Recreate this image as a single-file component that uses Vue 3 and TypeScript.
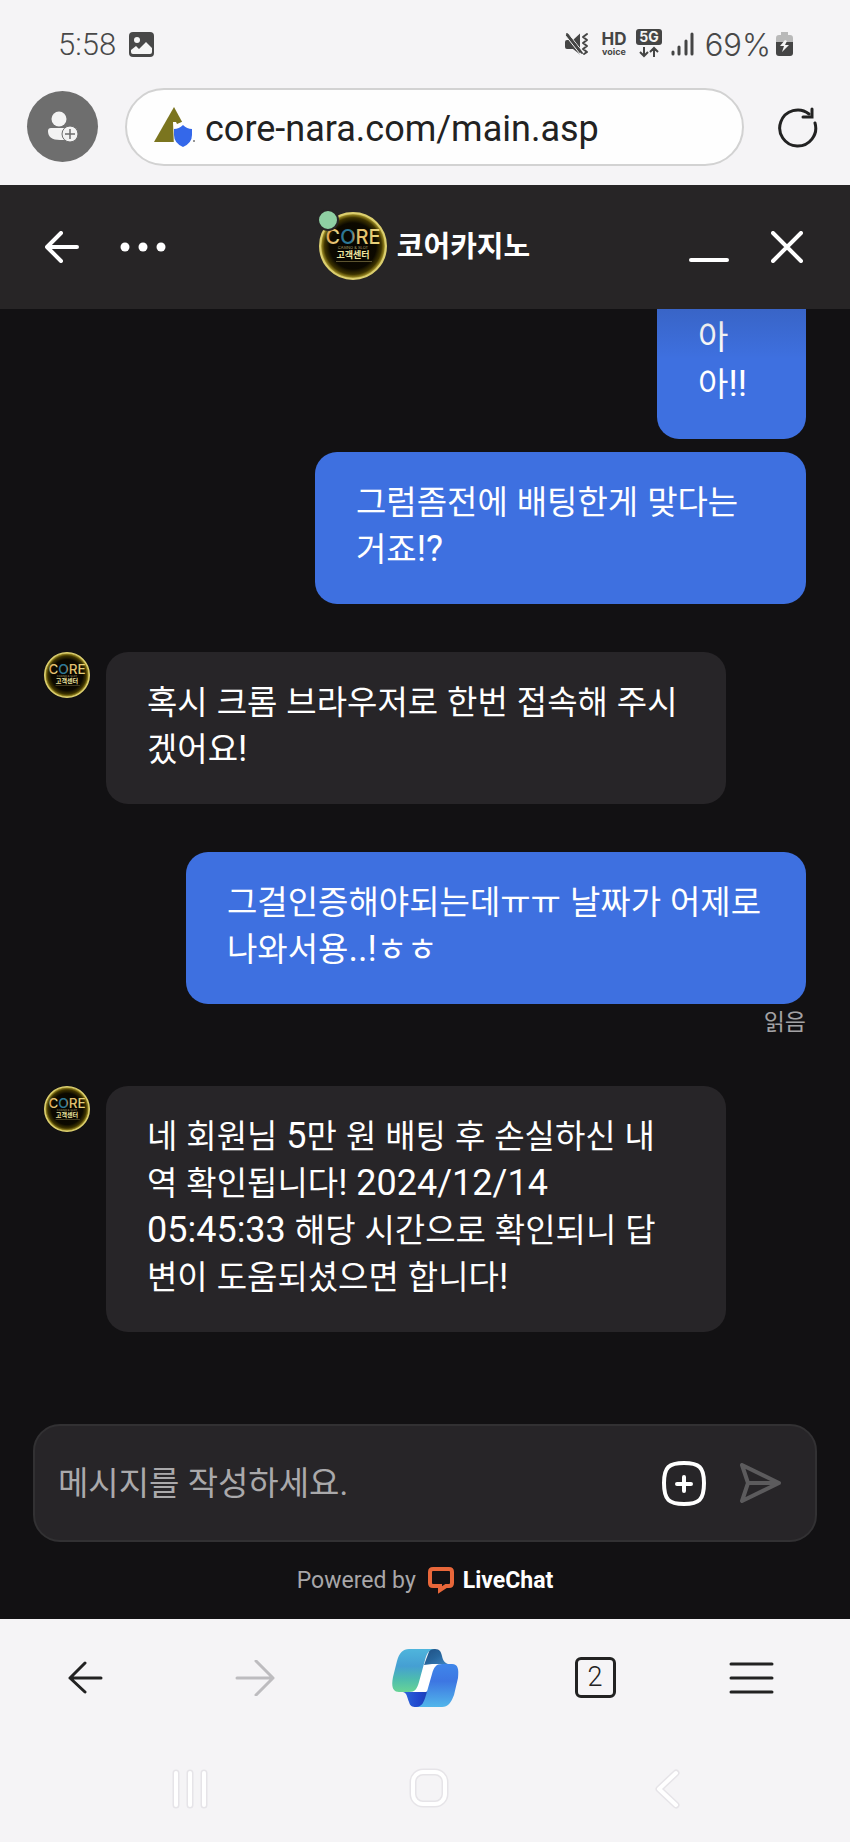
<script setup lang="ts">
import { ref } from 'vue'

interface Message {
  id: number
  from: 'me' | 'agent'
  lines: string[]
  size?: 'narrow' | 'medium'
  status?: string
}

const address = ref('core-nara.com/main.asp')
const draft = ref('')

const messages: Message[] = [
  { id: 1, from: 'me', lines: ['아', '아!!'], size: 'narrow' },
  { id: 2, from: 'me', lines: ['그럼좀전에 배팅한게 맞다는', '거죠!?'], size: 'medium' },
  { id: 3, from: 'agent', lines: ['혹시 크롬 브라우저로 한번 접속해 주시', '겠어요!'] },
  { id: 4, from: 'me', lines: ['그걸인증해야되는데ㅠㅠ 날짜가 어제로', '나와서용..!ㅎㅎ'], status: '읽음' },
  {
    id: 5,
    from: 'agent',
    lines: [
      '네 회원님 5만 원 배팅 후 손실하신 내',
      '역 확인됩니다! 2024/12/14',
      '05:45:33 해당 시간으로 확인되니 답',
      '변이 도움되셨으면 합니다!',
    ],
  },
]

// Splits a line so that latin characters can be set slightly larger than hangul.
const runs = (line: string): string[] => line.split(/([ -~]+)/).filter((r) => r !== '')
const isLatin = (run: string): boolean => /^[ -~]/.test(run)
</script>

<template>
  <div class="phone">
    <svg class="defs" width="0" height="0" aria-hidden="true">
      <defs>
        <radialGradient id="coin">
          <stop offset="0" stop-color="#050400" />
          <stop offset="0.7" stop-color="#0c0900" />
          <stop offset="0.86" stop-color="#3d3300" />
          <stop offset="0.94" stop-color="#8c7c1c" />
          <stop offset="1" stop-color="#e9df82" />
        </radialGradient>
        <linearGradient id="gold" x1="0" y1="0" x2="1" y2="0">
          <stop offset="0" stop-color="#e0a050" />
          <stop offset="0.22" stop-color="#e8d080" />
          <stop offset="0.3" stop-color="#2c7796" />
          <stop offset="0.48" stop-color="#2c7796" />
          <stop offset="0.54" stop-color="#e0b866" />
          <stop offset="1" stop-color="#e8d77e" />
        </linearGradient>
        <symbol id="avatar" viewBox="0 0 68 68">
          <circle cx="34" cy="34" r="33" fill="url(#coin)" stroke="#dccf6e" stroke-width="2" />
          <text x="34" y="32" text-anchor="middle" font-family="Inter, sans-serif" font-size="20" font-weight="500" fill="url(#gold)">CORE</text>
          <text x="34" y="37" text-anchor="middle" font-family="Inter, sans-serif" font-size="4" fill="#a89a68">CASINO &amp; SLOT</text>
          <text x="34" y="46" text-anchor="middle" font-family="'Noto Sans CJK KR', sans-serif" font-size="9" font-weight="700" fill="#f0e6a0">고객센터</text>
          <rect x="17" y="49" width="36" height="1" fill="#5e5530" />
        </symbol>
      </defs>
    </svg>

    <div class="status">
      <span class="clock">5:58</span>
      <svg class="gallery" width="25" height="25" viewBox="0 0 25 25" aria-hidden="true">
        <rect width="25" height="25" rx="4" fill="#484848" />
        <circle cx="8" cy="8" r="3" fill="#f5f5f5" />
        <path d="M2 18 L7 14 L10 17 L17 10 L23 16 V20 Q23 22 21 22 H4 Q2 22 2 20Z" fill="#f5f5f5" />
      </svg>
      <span class="grow"></span>
      <svg class="signals" width="130" height="32" viewBox="0 0 130 32" aria-hidden="true">
        <g fill="#454545">
          <path d="M0 14 Q0 12 2 12 H8 L15 5.500 V26.500 L8 21 H2 Q0 21 0 19Z" />
          <path d="M0 7 L3 5 L17 23 L15 26Z" stroke="#f5f5f5" stroke-width="1" />
          <path d="M2 6 L17 25" stroke="#454545" stroke-width="2" stroke-linecap="round" />
        </g>
        <path d="M22 6 L18 9 L22 12 L18 15 L22 18 L18 21 L22 24 L19 26" fill="none" stroke="#454545" stroke-width="2" stroke-linejoin="round" stroke-linecap="round" />
        <text x="49" y="17" text-anchor="middle" font-family="Inter, sans-serif" font-size="17" font-weight="700" fill="#454545">HD</text>
        <text x="49" y="27" text-anchor="middle" font-family="Inter, sans-serif" font-size="9" font-weight="700" fill="#454545">voice</text>
        <rect x="71" y="1" width="26" height="16" rx="3" fill="#454545" />
        <text x="84" y="14" text-anchor="middle" font-family="Inter, sans-serif" font-size="14" font-weight="700" fill="#f5f5f5">5G</text>
        <path d="M79 19 V28 M75 24 L79 28 L83 24 M89 29 V20 M85 24 L89 20 L93 24" fill="none" stroke="#454545" stroke-width="2" />
        <path d="M108 24 V26 M114 19 V26 M121 13 V26 M127 6 V26" stroke="#454545" stroke-width="3" stroke-linecap="round" />
      </svg>
      <span class="percent">69%</span>
      <svg class="battery" width="17" height="25" viewBox="0 0 17 25" aria-hidden="true">
        <path d="M5 0 H12 V3 H14 Q17 3 17 6 V11 H0 V6 Q0 3 3 3 H5Z" fill="#b9b9b9" />
        <path d="M0 10 H17 V21 Q17 24 14 24 H3 Q0 24 0 21Z" fill="#454545" />
        <path d="M9 8 L4 14 H8 L6 20 L13 13 H9 L11 9Z" fill="#f5f5f5" />
      </svg>
    </div>

    <div class="browser-top">
      <button class="profile" type="button" aria-label="프로필">
        <svg width="32" height="32" viewBox="0 0 32 32">
          <circle cx="12" cy="8" r="7.500" fill="#f3f3f3" />
          <path d="M4 17 H20 V29 H13 Q1 29 1 20 Q1 17 4 17Z" fill="#f3f3f3" />
          <circle cx="23" cy="23" r="8" fill="#f3f3f3" stroke="#6e6e6e" stroke-width="1" />
          <path d="M23 18 V28 M18 23 H28" stroke="#6e6e6e" stroke-width="1.500" />
        </svg>
      </button>
      <label class="address">
        <svg width="42" height="42" viewBox="0 0 42 42" aria-hidden="true">
          <path d="M21 1 L40 36 H1Z" fill="#7b751f" />
          <path d="M20 16 H23 L24 18 L31 15 L42 20 V42 H21Z" fill="#fefefe" />
          <path d="M30 19 Q34 23 39 23 V29 Q39 37 30 41 Q21 37 21 29 V23 Q26 23 30 19Z" fill="#3468ea" />
          <circle cx="41" cy="35" r="1" fill="#777" />
        </svg>
        <input v-model="address" type="text" aria-label="주소" />
      </label>
      <button class="reload" type="button" aria-label="새로고침">
        <svg width="42" height="42" viewBox="0 0 42 42" fill="none" stroke="#222" stroke-width="3" stroke-linecap="round">
          <path d="M39 17 A18 18 0 1 1 33 8" />
          <path d="M36 3 V11 H27" stroke-linejoin="miter" />
        </svg>
      </button>
    </div>

    <main class="chat">
      <header class="chat-head">
        <button type="button" aria-label="뒤로">
          <svg width="34" height="32" viewBox="0 0 34 32" fill="none" stroke="#fff" stroke-width="4" stroke-linecap="round" stroke-linejoin="round">
            <path d="M16 2 L2 16 L16 30 M2 16 H32" />
          </svg>
        </button>
        <button class="more" type="button" aria-label="더보기">
          <svg width="46" height="10" viewBox="0 0 46 10" fill="#fff">
            <circle cx="5" cy="5" r="4.500" /><circle cx="23" cy="5" r="4.500" /><circle cx="41" cy="5" r="4.500" />
          </svg>
        </button>
        <div class="who">
          <span class="portrait">
            <svg width="68" height="68" role="img" aria-label="코어카지노"><use href="#avatar" /></svg>
            <i class="online"></i>
          </span>
          <h1>코어카지노</h1>
        </div>
        <button class="minimize" type="button" aria-label="최소화">
          <svg width="40" height="32" viewBox="0 0 40 32"><path d="M2 29 H38" stroke="#fff" stroke-width="4" stroke-linecap="round" /></svg>
        </button>
        <button type="button" aria-label="닫기">
          <svg width="32" height="32" viewBox="0 0 32 32"><path d="M2 2 L30 30 M30 2 L2 30" stroke="#fff" stroke-width="4" stroke-linecap="round" /></svg>
        </button>
      </header>

      <section class="thread">
        <article v-for="m in messages" :key="m.id" class="message" :class="m.from">
          <svg v-if="m.from === 'agent'" class="face" width="46" height="46" aria-hidden="true"><use href="#avatar" /></svg>
          <div class="bubble" :class="m.size">
            <p v-for="(line, i) in m.lines" :key="i">
              <span v-for="(run, j) in runs(line)" :key="j" :class="{ latin: isLatin(run) }">{{ run }}</span>
            </p>
          </div>
          <small v-if="m.status">{{ m.status }}</small>
        </article>
      </section>

      <form class="composer" @submit.prevent>
        <input v-model="draft" type="text" placeholder="메시지를 작성하세요." aria-label="메시지" />
        <button type="button" aria-label="추가">
          <svg width="44" height="45" viewBox="0 0 44 45" fill="none" stroke="#fff" stroke-width="4" stroke-linecap="round">
            <path d="M22 2 C37 2 42 6 42 22 C42 39 37 43 22 43 C7 43 2 39 2 22 C2 6 7 2 22 2Z" />
            <path d="M22 16 V30 M15 23 H29" />
          </svg>
        </button>
        <button class="send" type="submit" aria-label="보내기">
          <svg width="43" height="40" viewBox="0 0 43 40" fill="none" stroke="#5c5b5d" stroke-width="4" stroke-linecap="round" stroke-linejoin="round">
            <path d="M3 2 L40 20 L3 38 L9 20Z M9 20 H40" />
          </svg>
        </button>
      </form>

      <footer class="powered">
        <span>Powered by</span>
        <a href="#">
          <svg width="26" height="27" viewBox="0 0 26 27" aria-hidden="true">
            <path d="M5 2 H21 Q24 2 24 5 V16 Q24 19 21 19 H18 L12 23 V19 H5 Q2 19 2 16 V5 Q2 2 5 2Z" fill="none" stroke="#e8673a" stroke-width="4" />
          </svg>
          <b>LiveChat</b>
        </a>
      </footer>
    </main>

    <nav class="browser-nav" aria-label="브라우저">
      <button type="button" aria-label="이전">
        <svg width="36" height="34" viewBox="0 0 36 34" fill="none" stroke="#222" stroke-width="3" stroke-linecap="round" stroke-linejoin="round">
          <path d="M18 2 L3 17 L18 31 M3 17 H34" />
        </svg>
      </button>
      <button type="button" aria-label="다음">
        <svg width="40" height="36" viewBox="0 0 40 36" fill="none" stroke="#bdbcbf" stroke-width="3" stroke-linecap="round" stroke-linejoin="round">
          <path d="M21 1 L38 18 L21 35 M38 18 H2" />
        </svg>
      </button>
      <button type="button" aria-label="Copilot">
        <svg width="67" height="58" viewBox="0 0 67 58">
          <defs>
            <linearGradient id="cp-left" x1="0" y1="0" x2="0" y2="1"><stop offset="0" stop-color="#4fb5dc" /><stop offset="0.4" stop-color="#459fd3" /><stop offset="0.7" stop-color="#4dbcae" /><stop offset="1" stop-color="#68d496" /></linearGradient>
            <linearGradient id="cp-top" x1="0" y1="0" x2="1" y2="1"><stop offset="0" stop-color="#1f4f83" /><stop offset="0.5" stop-color="#27659c" /><stop offset="1" stop-color="#4087c4" /></linearGradient>
            <linearGradient id="cp-right" x1="0" y1="0" x2="0" y2="1"><stop offset="0" stop-color="#3f86ea" /><stop offset="0.4" stop-color="#3d76e2" /><stop offset="1" stop-color="#52b6ea" /></linearGradient>
            <linearGradient id="cp-bottom" x1="0" y1="0" x2="1" y2="0"><stop offset="0" stop-color="#2c66dc" /><stop offset="0.6" stop-color="#2146cc" /><stop offset="1" stop-color="#1a3eae" /></linearGradient>
          </defs>
          <path d="M30 14 H46 L36 44 H20Z" fill="#fff" />
          <path d="M11 43 C15 44 15 48 17 53 C18 57 20 58 24 58 H32 L38 40 L34 43Z" fill="url(#cp-bottom)" />
          <path d="M32 16 L38 0 H43 C48 0 49 3 50 7 C51 12 53 14 56 15 H40Z" fill="url(#cp-top)" />
          <path d="M17 0 H43 C37 0 35 4 33 11 L27 33 C25 40 23 43 17 43 H7 C1 43 -1 38 1 28 L5 12 C7 4 11 0 17 0Z" fill="url(#cp-left)" />
          <path d="M50 15 H60 C66 15 67 20 66 29 L62 46 C59 54 56 58 50 58 H24 C30 58 32 53 34 46 L40 25 C42 18 44 15 50 15Z" fill="url(#cp-right)" />
        </svg>
      </button>
      <button type="button" aria-label="탭">
        <span class="tabs">2</span>
      </button>
      <button class="menu" type="button" aria-label="메뉴">
        <svg width="46" height="34" viewBox="0 0 46 34"><path d="M2 3 H43 M2 17 H43 M2 31 H43" stroke="#222" stroke-width="3" stroke-linecap="round" /></svg>
      </button>
    </nav>

    <nav class="system-nav" aria-label="시스템">
      <button type="button" aria-label="최근 앱">
        <svg width="40" height="42" viewBox="0 0 40 42" fill="none" stroke-linecap="round">
          <path d="M6 5 V37 M20 5 V37 M34 5 V37" stroke="#e6e4e8" stroke-width="7" />
          <path d="M6 5 V37 M20 5 V37 M34 5 V37" stroke="#fff" stroke-width="4" />
        </svg>
      </button>
      <button type="button" aria-label="홈">
        <svg width="40" height="40" viewBox="0 0 40 40" fill="none">
          <rect x="4" y="4" width="32" height="32" rx="10" stroke="#e6e4e8" stroke-width="7" />
          <rect x="4" y="4" width="32" height="32" rx="10" stroke="#fff" stroke-width="4" />
        </svg>
      </button>
      <button type="button" aria-label="뒤로">
        <svg width="28" height="42" viewBox="0 0 28 42" fill="none" stroke-linecap="round" stroke-linejoin="round">
          <path d="M23 5 L6 21 L23 37" stroke="#e6e4e8" stroke-width="7" />
          <path d="M23 5 L6 21 L23 37" stroke="#fff" stroke-width="4" />
        </svg>
      </button>
    </nav>
  </div>
</template>

<style>
body {
  background: #f4f3f6;
}
</style>

<style scoped>
* {
  box-sizing: border-box;
}
.phone {
  display: flex;
  flex-direction: column;
  height: 100vh;
  background: #f5f4f6;
  font-family: Roboto, 'Noto Sans CJK KR', sans-serif;
  color: #222;
}
.defs {
  position: absolute;
}
svg {
  display: block;
  flex: none;
}
button {
  display: flex;
  align-items: center;
  justify-content: center;
  padding: 0;
  border: 0;
  background: none;
  color: inherit;
  font: inherit;
}
input {
  min-width: 0;
  flex: 1;
  padding: 0;
  border: 0;
  outline: 0;
  background: none;
  font: inherit;
  color: inherit;
}
.status {
  display: flex;
  align-items: center;
  height: 88px;
  padding: 0 57px 0 58px;
  color: #484848;
}
.clock {
  font-size: 31px;
  font-weight: 300;
}
.gallery {
  margin-left: 13px;
}
.grow {
  flex: 1;
}
.percent {
  margin: 0 5px 0 10px;
  font: 300 31px Inter, sans-serif;
}
.browser-top {
  display: flex;
  align-items: center;
  height: 97px;
  padding: 0 32px 20px 27px;
}
.profile {
  width: 71px;
  height: 71px;
  border-radius: 50%;
  background: #6e6e6e;
}
.address {
  display: flex;
  flex: 1;
  align-items: center;
  gap: 10px;
  height: 78px;
  margin: 0 32px 0 27px;
  padding: 0 30px 0 26px;
  border: 2px solid #d2d2d2;
  border-radius: 39px;
  background: #fefefe;
  font-size: 36px;
}
.address input {
  padding-top: 4px;
}
.chat {
  display: flex;
  flex: 1;
  flex-direction: column;
  min-height: 0;
  background: #121113;
  color: #fff;
}
.chat-head {
  display: flex;
  flex: none;
  align-items: center;
  height: 124px;
  padding: 0 47px 0 45px;
  background: #272526;
}
.more {
  margin-left: 41px;
}
.who {
  display: flex;
  flex: 1;
  align-items: center;
  justify-content: center;
  gap: 10px;
  padding: 0 6px 3px 0;
}
.portrait {
  position: relative;
}
.online {
  position: absolute;
  top: -3px;
  left: -2px;
  width: 22px;
  height: 22px;
  border: 2px solid #272526;
  border-radius: 50%;
  background: #8fd0a3;
}
h1 {
  margin: 0;
  padding-bottom: 3px;
  font: 700 29px/44px 'Noto Sans CJK KR', sans-serif;
}
.minimize {
  margin-right: 42px;
}
.thread {
  position: relative;
  display: flex;
  flex: 1;
  flex-direction: column;
  justify-content: flex-end;
  gap: 48px;
  min-height: 0;
  padding: 0 44px 92px;
  overflow: hidden;
}
.thread::before {
  content: '';
  position: absolute;
  inset: 0 0 auto;
  z-index: 1;
  height: 50px;
  background: linear-gradient(rgba(18, 17, 19, 0.12), rgba(18, 17, 19, 0));
}
.message {
  display: flex;
  flex: none;
  align-items: flex-start;
}
.message.me {
  flex-direction: column;
  align-items: flex-end;
}
.message.me + .message.me {
  margin-top: -35px;
}
.face {
  margin-right: 16px;
}
.bubble {
  width: 620px;
  max-width: 82%;
  padding: 27px 41px 31px;
  border-radius: 22px;
  background: #272528;
  font-size: 33px;
  line-height: 47px;
}
.me .bubble {
  background: #3e70e0;
}
.bubble.medium {
  width: 491px;
}
.bubble.narrow {
  width: 149px;
}
.bubble p {
  height: 47px;
  margin: 0;
  white-space: pre;
}
.latin {
  font-size: 36px;
}
small {
  height: 30px;
  margin-top: 4px;
  font-size: 23px;
  line-height: 30px;
  color: #a3a2a4;
}
.composer {
  display: flex;
  flex: none;
  align-items: center;
  height: 118px;
  margin: 0 33px;
  padding: 0 33px 0 23px;
  border: 2px solid #323133;
  border-radius: 27px;
  background: #272528;
  font-size: 33px;
}
.composer input::placeholder {
  color: #aaa9ab;
  opacity: 1;
}
.send {
  margin-left: 33px;
}
.powered {
  display: flex;
  flex: none;
  align-items: center;
  justify-content: center;
  gap: 12px;
  height: 77px;
  font-size: 23px;
  color: #a8a7a9;
}
.powered a {
  display: flex;
  align-items: center;
  gap: 9px;
  color: #fff;
  text-decoration: none;
}
.browser-nav {
  display: grid;
  flex: none;
  grid-template-columns: repeat(5, 1fr);
  align-items: center;
  height: 117px;
}
.tabs {
  width: 41px;
  height: 41px;
  border: 3px solid #222;
  border-radius: 6px;
  font-size: 27px;
  font-weight: 300;
  line-height: 35px;
  text-align: center;
}
.menu {
  padding-right: 27px;
}
.system-nav {
  display: flex;
  flex: none;
  align-items: flex-start;
  justify-content: space-between;
  height: 106px;
  padding: 32px 163px 0 170px;
}
.system-nav button {
  width: 40px;
}
</style>
